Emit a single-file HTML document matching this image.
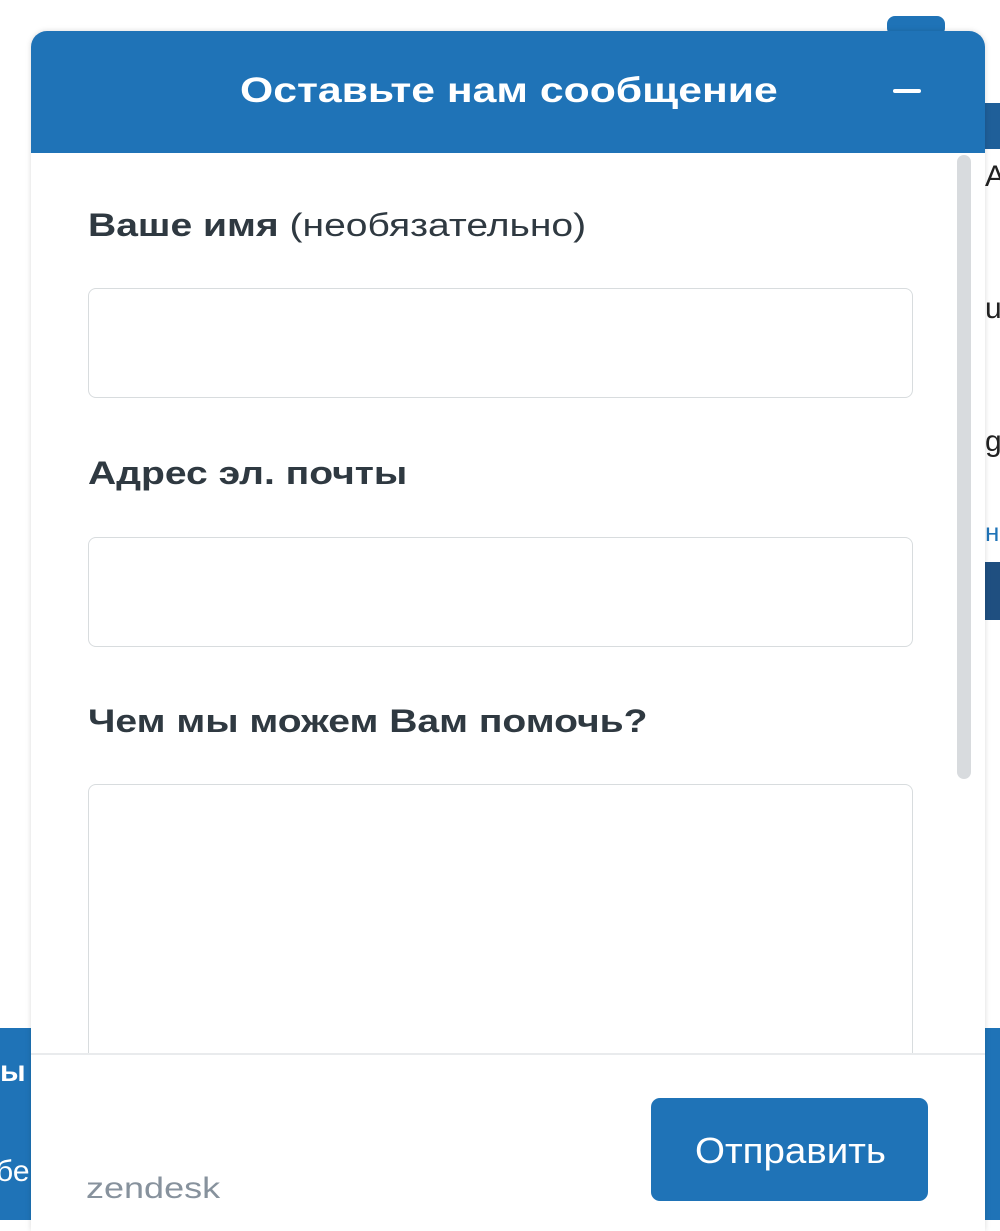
<!DOCTYPE html>
<html><head><meta charset="utf-8"><style>
*{margin:0;padding:0;box-sizing:border-box}
body{width:1000px;height:1220px;overflow:hidden;background:#fff;position:relative;font-family:"Liberation Sans","DejaVu Sans",sans-serif;color:#2f3941}
.abs{position:absolute}
.w{left:31px;top:31px;width:954px;height:1200px;background:#fff;border-radius:16px 16px 0 0;overflow:hidden;box-shadow:0 0 6px rgba(0,0,0,.15)}
.hd{left:0;top:0;width:954px;height:122px;background:#1f73b7}
.ht{left:209px;top:40px;color:#fff;font-weight:bold;font-size:35px;white-space:nowrap;transform:scaleX(1.22);transform-origin:left top}
.min{left:862px;top:58px;width:28px;height:4px;background:#fff;border-radius:2px}
.lab{left:57px;font-size:32px;font-weight:bold;color:#2f3941;white-space:nowrap;transform:scaleX(1.22);transform-origin:left top}
.lab span{font-weight:normal;color:#2f3941}
.inp{left:57px;width:825px;border:1.5px solid #d8dcde;border-radius:8px}
.sb{left:926px;top:124px;width:14px;height:624px;background:#d8dbde;border-radius:7px}
.ft{left:0;top:1022px;width:954px;height:200px;background:#fff;border-top:2px solid #e9ebed}
.btn{left:620px;top:1067px;width:277px;height:103px;background:#1f73b7;border-radius:9px}
.bt{left:664px;top:1099px;color:#fff;font-size:36px;white-space:nowrap;transform:scaleX(1.07);transform-origin:left top}
.zd{left:55px;top:1141px;font-size:30px;color:#87929d;white-space:nowrap;transform:scaleX(1.2);transform-origin:left top}
</style></head><body>
<div class="abs" style="left:0;top:1028px;width:31px;height:192px;background:#1f73b7"></div>
<div class="abs" style="left:0;top:1055px;color:#fff;font-weight:bold;font-size:30px">ы</div>
<div class="abs" style="left:-4px;top:1155px;color:#fff;font-size:30px">бе</div>
<div class="abs" style="left:985px;top:1028px;width:15px;height:192px;background:#1f73b7"></div>
<div class="abs" style="left:985px;top:103px;width:15px;height:46px;background:#1f5f99"></div>
<div class="abs" style="left:887px;top:16px;width:58px;height:20px;background:#1f73b7;border-radius:8px"></div>
<div class="abs" style="left:985px;top:160px;font-size:30px;color:#222">A</div>
<div class="abs" style="left:985px;top:292px;font-size:30px;color:#222">u</div>
<div class="abs" style="left:985px;top:425px;font-size:30px;color:#222">g</div>
<div class="abs" style="left:985px;top:517px;font-size:26px;color:#1f73b7">н</div>
<div class="abs" style="left:985px;top:562px;width:15px;height:58px;background:#1f4f80"></div>
<div class="abs w">
 <div class="abs hd"></div>
 <div class="abs ht">Оставьте нам сообщение</div>
 <div class="abs min"></div>
 <div class="abs lab" style="top:176px">Ваше имя <span>(необязательно)</span></div>
 <div class="abs inp" style="top:257px;height:110px"></div>
 <div class="abs lab" style="top:424px">Адрес эл. почты</div>
 <div class="abs inp" style="top:506px;height:110px"></div>
 <div class="abs lab" style="top:672px">Чем мы можем Вам помочь?</div>
 <div class="abs inp" style="top:753px;height:300px"></div>
 <div class="abs sb"></div>
 <div class="abs ft"></div>
 <div class="abs btn"></div>
 <div class="abs bt">Отправить</div>
 <div class="abs zd">zendesk</div>
</div>
</body></html>
